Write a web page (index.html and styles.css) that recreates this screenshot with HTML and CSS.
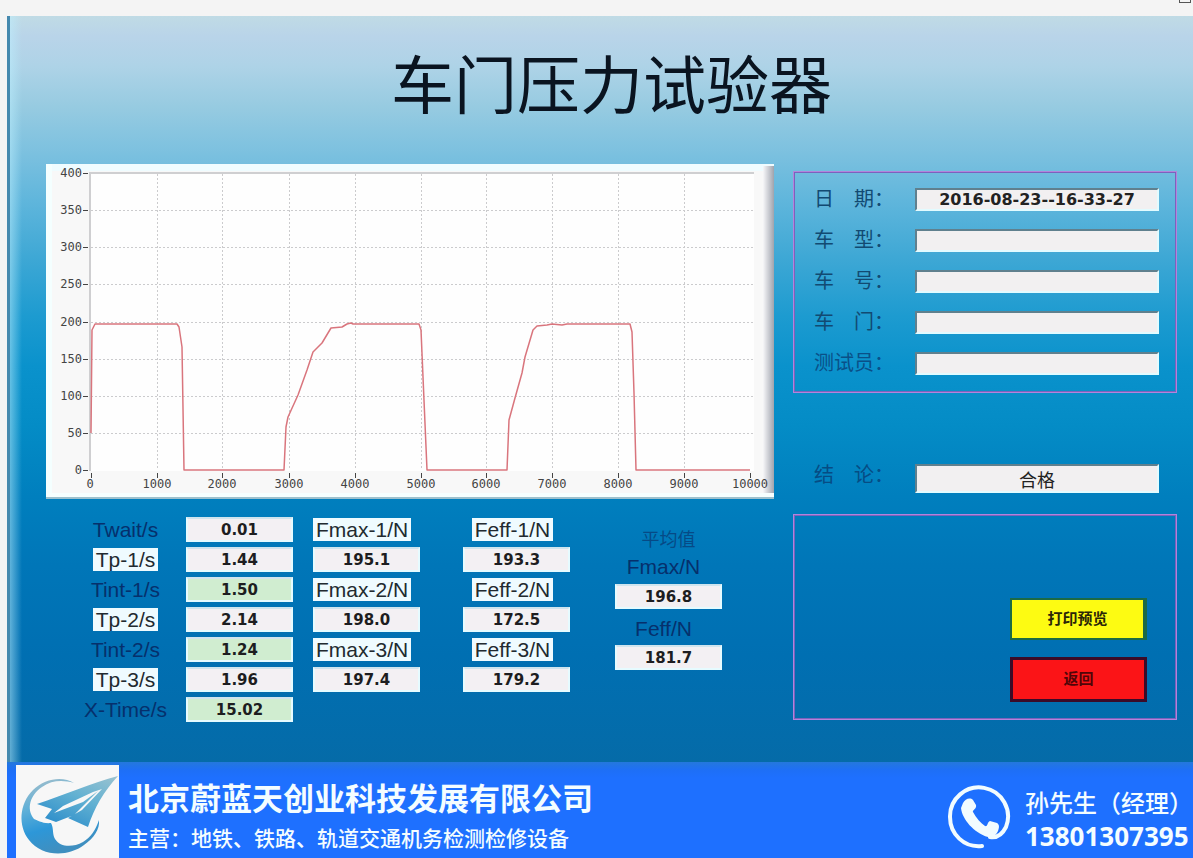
FILE: index.html
```html
<!DOCTYPE html>
<html lang="zh-CN">
<head>
<meta charset="utf-8">
<meta name="viewport" content="width=device-width, initial-scale=1">
<title>车门压力试验器</title>
<link rel="stylesheet" href="styles.css">
</head>
<body>
<div class="topbar"><span class="topbar-mark"></span></div>
<div class="frame">
  <main class="panel">
    <h1 class="title">车门压力试验器</h1>
    <div class="columns">
      <section class="left">
        <svg class="chart" viewBox="0 0 728 335" role="img" aria-label="压力曲线">
          <defs>
            <linearGradient id="edge" x1="0" x2="1" y1="0" y2="0">
              <stop offset="0" stop-color="#f7f7f9"/>
              <stop offset="1" stop-color="#9fa3ad"/>
            </linearGradient>
          </defs>
          <rect width="728" height="335" fill="#f8f8f8"/>
          <rect width="728" height="7" fill="#effcff"/>
          <rect width="6" height="335" fill="#f4ffff"/>
          <rect x="717" y="2" width="11" height="327" fill="url(#edge)"/>
          <rect y="329" width="728" height="4" fill="#f6ffff"/>
          <rect y="333" width="728" height="2" fill="#9dc0cd"/>
          <rect x="45" y="9" width="663" height="298" fill="#fefefe"/>
          <path d="M44 307V9H708" fill="none" stroke="#cfcfd1" stroke-width="2"/>
          <g stroke="#cbcbcd" stroke-width="1" stroke-dasharray="2 2">
            <path d="M45 46.500H708M45 83.500H708M45 120.500H708M45 158.500H708M45 195.500H708M45 232.500H708M45 269.500H708"/>
            <path d="M111.500 10V306M176.500 10V306M243.500 10V306M309.500 10V306M375.500 10V306M440.500 10V306M506.500 10V306M572.500 10V306M638.500 10V306"/>
          </g>
          <path d="M37 9.500h5M37 46.500h5M37 83.500h5M37 120.500h5M37 158.500h5M37 195.500h5M37 232.500h5M37 269.500h5M37 306.500h5M45.500 309v5M111.500 309v5M176.500 309v5M243.500 309v5M309.500 309v5M375.500 309v5M440.500 309v5M506.500 309v5M572.500 309v5M638.500 309v5M704.500 309v5" stroke="#444" fill="none"/>
          <g class="tick tick-y">
            <text x="36" y="13">400</text><text x="36" y="50">350</text><text x="36" y="87">300</text>
            <text x="36" y="124">250</text><text x="36" y="162">200</text><text x="36" y="199">150</text>
            <text x="36" y="236">100</text><text x="36" y="273">50</text><text x="36" y="310">0</text>
          </g>
          <g class="tick tick-x">
            <text x="44" y="324">0</text><text x="111" y="324">1000</text><text x="176" y="324">2000</text>
            <text x="243" y="324">3000</text><text x="309" y="324">4000</text><text x="375" y="324">5000</text>
            <text x="440" y="324">6000</text><text x="506" y="324">7000</text><text x="572" y="324">8000</text>
            <text x="638" y="324">9000</text><text x="704" y="324">10000</text>
          </g>
          <path d="M45 269L46 166L49 160H131L133 163L136 183L138 306H238L240 263L242 253L252 231L261 206L267 188L271 184L276 179L285 164L296 163L301 160L305 159L307 160H373L375 166L377 213L381 306H461L463 256L469 234L476 209L479 193L487 166L491 162L501 161L506 160L516 161L521 160H584L586 168L588 229L590 306H704" fill="none" stroke="#d9757d" stroke-width="1.500" stroke-linejoin="round"/>
        </svg>

        <div class="readings">
          <div class="group times">
            <label class="name" for="twait">Twait/s</label><input class="value" id="twait" value="0.01" readonly>
            <label class="name boxed" for="tp1">Tp-1/s</label><input class="value" id="tp1" value="1.44" readonly>
            <label class="name" for="tint1">Tint-1/s</label><input class="value green" id="tint1" value="1.50" readonly>
            <label class="name boxed" for="tp2">Tp-2/s</label><input class="value" id="tp2" value="2.14" readonly>
            <label class="name" for="tint2">Tint-2/s</label><input class="value green" id="tint2" value="1.24" readonly>
            <label class="name boxed" for="tp3">Tp-3/s</label><input class="value" id="tp3" value="1.96" readonly>
            <label class="name" for="xtime">X-Time/s</label><input class="value green" id="xtime" value="15.02" readonly>
          </div>
          <div class="group fmax">
            <label class="name boxed" for="fmax1">Fmax-1/N</label><input class="value" id="fmax1" value="195.1" readonly>
            <label class="name boxed" for="fmax2">Fmax-2/N</label><input class="value" id="fmax2" value="198.0" readonly>
            <label class="name boxed" for="fmax3">Fmax-3/N</label><input class="value" id="fmax3" value="197.4" readonly>
          </div>
          <div class="group feff">
            <label class="name boxed" for="feff1">Feff-1/N</label><input class="value" id="feff1" value="193.3" readonly>
            <label class="name boxed" for="feff2">Feff-2/N</label><input class="value" id="feff2" value="172.5" readonly>
            <label class="name boxed" for="feff3">Feff-3/N</label><input class="value" id="feff3" value="179.2" readonly>
          </div>
          <div class="average">
            <h2 class="average-title">平均值</h2>
            <label class="name" for="fmaxavg">Fmax/N</label><input class="value" id="fmaxavg" value="196.8" readonly>
            <label class="name" for="feffavg">Feff/N</label><input class="value" id="feffavg" value="181.7" readonly>
          </div>
        </div>
      </section>

      <section class="right">
        <div class="box info">
          <div class="field"><label for="date">日　期：</label><input id="date" value="2016-08-23--16-33-27" readonly></div>
          <div class="field"><label for="model">车　型：</label><input id="model"></div>
          <div class="field"><label for="number">车　号：</label><input id="number"></div>
          <div class="field"><label for="door">车　门：</label><input id="door"></div>
          <div class="field dim"><label for="tester">测试员：</label><input id="tester"></div>
        </div>
        <div class="field result"><label for="verdict">结　论：</label><input id="verdict" value="合格" readonly></div>
        <div class="box actions">
          <button class="btn print" type="button">打印预览</button>
          <button class="btn back" type="button">返回</button>
        </div>
      </section>
    </div>
  </main>

  <footer class="footer">
    <svg class="logo" viewBox="0 0 103 93" role="img" aria-label="公司标志">
      <defs>
        <linearGradient id="moon" x1="0" x2="0.300" y1="0" y2="1">
          <stop offset="0" stop-color="#a9c0ca"/>
          <stop offset="0.400" stop-color="#5fb0d8"/>
          <stop offset="0.700" stop-color="#2d97d8"/>
          <stop offset="1" stop-color="#3f8fc0"/>
        </linearGradient>
        <linearGradient id="wing" x1="1" x2="0.300" y1="0" y2="1">
          <stop offset="0" stop-color="#9cc3d0"/>
          <stop offset="0.500" stop-color="#62b1d2"/>
          <stop offset="1" stop-color="#2f8fcb"/>
        </linearGradient>
      </defs>
      <rect width="103" height="93" fill="#f7f7f7"/>
      <path d="M58 18C47 11 29 13 17 25C3 39 2 61 13 75C26 92 52 92 68 80C78 73 84 64 83 55C79 66 75 72 67 77C56 83 44 82 39 74C36 69 38 63 35 58C27 59 21 55 18 54C10 44 14 30 26 22C36 15 47 15 58 18Z" fill="url(#moon)"/>
      <path d="M102 11C76 18 48 30 21 39L36 44L29 53L40 57L58 50L82 26L67 37L38 48L47 41L77 27L86 24L66 45L52 53L72 62C78 43 88 26 102 11Z" fill="url(#wing)"/>
    </svg>
    <div class="company">
      <strong class="company-name">北京蔚蓝天创业科技发展有限公司</strong>
      <span class="company-scope">主营<span class="colon">：</span>地铁、铁路、轨道交通机务检测检修设备</span>
    </div>
    <svg class="phone" viewBox="0 0 64 64" aria-hidden="true">
      <path d="M35 61C17 63 3 49 3 32A29 29 0 1 1 59 42C55 50 49 53 43 52" fill="none" stroke="#f2fcff" stroke-width="4" stroke-linecap="round"/>
      <path d="M16 18C18 14 23 12 26 15L29 20C30 24 25 25 26 27C29 33 34 38 38 41C41 42 40 37 43 36L50 38C53 40 52 43 51 46C49 50 46 53 41 52C27 48 15 34 14 23Z" fill="#f2fcff"/>
    </svg>
    <div class="contact">
      <span class="contact-name">孙先生（经理）</span>
      <span class="contact-number">13801307395</span>
    </div>
  </footer>
</div>
</body>
</html>
```

FILE: styles.css
```css
* { box-sizing: border-box; }

body {
  margin: 0;
  min-height: 100vh;
  display: flex;
  flex-direction: column;
  background: #f4f4f4;
  font-family: "Liberation Sans", "Noto Sans CJK SC", sans-serif;
}

.topbar {
  height: 16px;
  display: flex;
  justify-content: flex-end;
  padding-right: 2px;
}

.topbar-mark {
  width: 12px;
  height: 3px;
  border: 1px solid #555;
  border-top: 0;
}

.frame {
  flex: 1;
  display: flex;
  flex-direction: column;
  margin-left: 7px;
}

.panel {
  flex: 1;
  padding: 0 16px 40px 36px;
  border-left: 3px solid #4589ae;
  background:
    linear-gradient(90deg, rgba(190, 240, 255, 0.5), rgba(120, 200, 240, 0) 12px),
    linear-gradient(180deg, #c0dbe5 0, #b9d4e9 20px, #aed3e7 50px, #97cbe1 90px, #7ac0df 140px, #60b6dc 184px, #3fa8d5 240px, #1d9bd0 300px, #0a92cc 350px, #048cc6 410px, #007fbe 480px, #0076b8 550px, #006fb2 640px, #056ba8 746px);
}

.title {
  margin: 0;
  padding-top: 20px;
  height: 148px;
  font: 400 63px/90px "Noto Sans CJK SC", sans-serif;
  text-align: center;
  color: #0a1420;
}

.columns {
  display: grid;
  grid-template-columns: 728fr 384fr;
  gap: 19px;
}

.chart {
  display: block;
  width: 100%;
}

.tick {
  font: 12px "DejaVu Sans Mono", monospace;
  fill: #444;
}

.tick-x { text-anchor: middle; }
.tick-y { text-anchor: end; }

.readings {
  display: flex;
  padding: 18px 0 0 26px;
}

.group {
  display: grid;
  grid-auto-rows: 25px;
  row-gap: 5px;
  align-content: start;
}

.times {
  grid-template-columns: 107px 107px;
  column-gap: 7px;
}

.fmax { width: 107px; margin-left: 20px; }
.feff { width: 107px; margin-left: 43px; }

.name {
  justify-self: center;
  align-self: center;
  font-size: 21px;
  line-height: 23px;
  color: #06306c;
  white-space: nowrap;
}

.boxed {
  padding: 0 3px;
  background: #effbff;
  color: #222a30;
}

.fmax .name { justify-self: start; }
.feff .name { margin-right: 8px; }

.value {
  width: 107px;
  height: 25px;
  padding: 0;
  border: 2px solid #e6fbff;
  border-top-color: #cfe4ee;
  background: #f3f0f3;
  font: 700 15px "DejaVu Sans", sans-serif;
  text-align: center;
  color: #1d1d20;
}

.green { background: #d0edd0; }

.average {
  width: 107px;
  margin-left: 45px;
  padding-top: 8px;
  display: flex;
  flex-direction: column;
  align-items: center;
}

.average-title {
  margin: 0;
  font: 400 18px/26px "Noto Sans CJK SC", sans-serif;
  color: #064a86;
}

.average .name { margin-right: 10px; padding-top: 6px; padding-bottom: 2px; line-height: 28px; }
.average .value { flex: none; }
.average .name:first-of-type { padding: 2px 0 3px; }

.right {
  padding-top: 7px;
}

.box {
  border: 2px solid #7c62bc;
  outline: 1px solid #b384dc;
  outline-offset: -1px;
}

.info {
  display: flex;
  flex-direction: column;
  gap: 18px;
  height: 222px;
  padding: 15px 16px 0 19px;
}

.field {
  display: flex;
  align-items: flex-start;
  justify-content: space-between;
}

.field label {
  font: 400 20px/20px "Noto Sans CJK SC", sans-serif;
  color: #124a72;
}

.dim label { color: #0a5088; }

.field input {
  width: 244px;
  height: 23px;
  padding: 0;
  border: 2px solid #e2fbff;
  border-top: 2px solid #60808e;
  border-left-color: #60808e;
  background: #f2f0f1;
  font: 700 16px/18px "DejaVu Sans", sans-serif;
  text-align: center;
  color: #222;
}

.result {
  margin: 71px 18px 21px 21px;
}

.result label { color: #064c84; }

.result input {
  height: 29px;
  font: 400 18px/24px "Noto Sans CJK SC", sans-serif;
}

.actions {
  height: 206px;
  display: flex;
  flex-direction: column;
  align-items: flex-end;
  gap: 17px;
  padding: 82px 28px 0 0;
}

.btn {
  width: 137px;
  height: 42px;
  padding: 0 0 4px;
  font: 700 15px "Noto Sans CJK SC", sans-serif;
  color: #2a2608;
}

.print {
  border: 2px solid #1c6a45;
  border-right-width: 4px;
  background: #fdfb12;
}

.back {
  height: 45px;
  border: 3px solid #3b0b28;
  background: #fb1417;
  color: #500508;
}

.footer {
  display: flex;
  align-items: flex-end;
  height: 96px;
  padding-left: 9px;
  background: linear-gradient(180deg, #2478dc 0, #1e6ff6 8px, #1e70ff 16px);
  color: #f4fdff;
}

.logo {
  width: 103px;
  height: 93px;
}

.company {
  flex: 1;
  display: flex;
  flex-direction: column;
  padding: 0 0 5px 9px;
  font-family: "Noto Sans CJK SC", sans-serif;
  white-space: nowrap;
}

.company-name { font-size: 31px; line-height: 48px; }
.company-scope { font-size: 21px; line-height: 32px; font-weight: 500; }
.colon { font-family: "Noto Sans CJK JP", sans-serif; }

.phone {
  width: 64px;
  height: 64px;
  margin: 0 14px 9px 0;
}

.contact {
  display: flex;
  flex-direction: column;
  width: 168px;
  padding-bottom: 5px;
  font-family: "Noto Sans CJK SC", sans-serif;
  white-space: nowrap;
}

.contact-name { font-size: 24px; line-height: 34px; font-weight: 500; }
.contact-number { font: 700 26px/34px "Noto Sans", sans-serif; }
```
